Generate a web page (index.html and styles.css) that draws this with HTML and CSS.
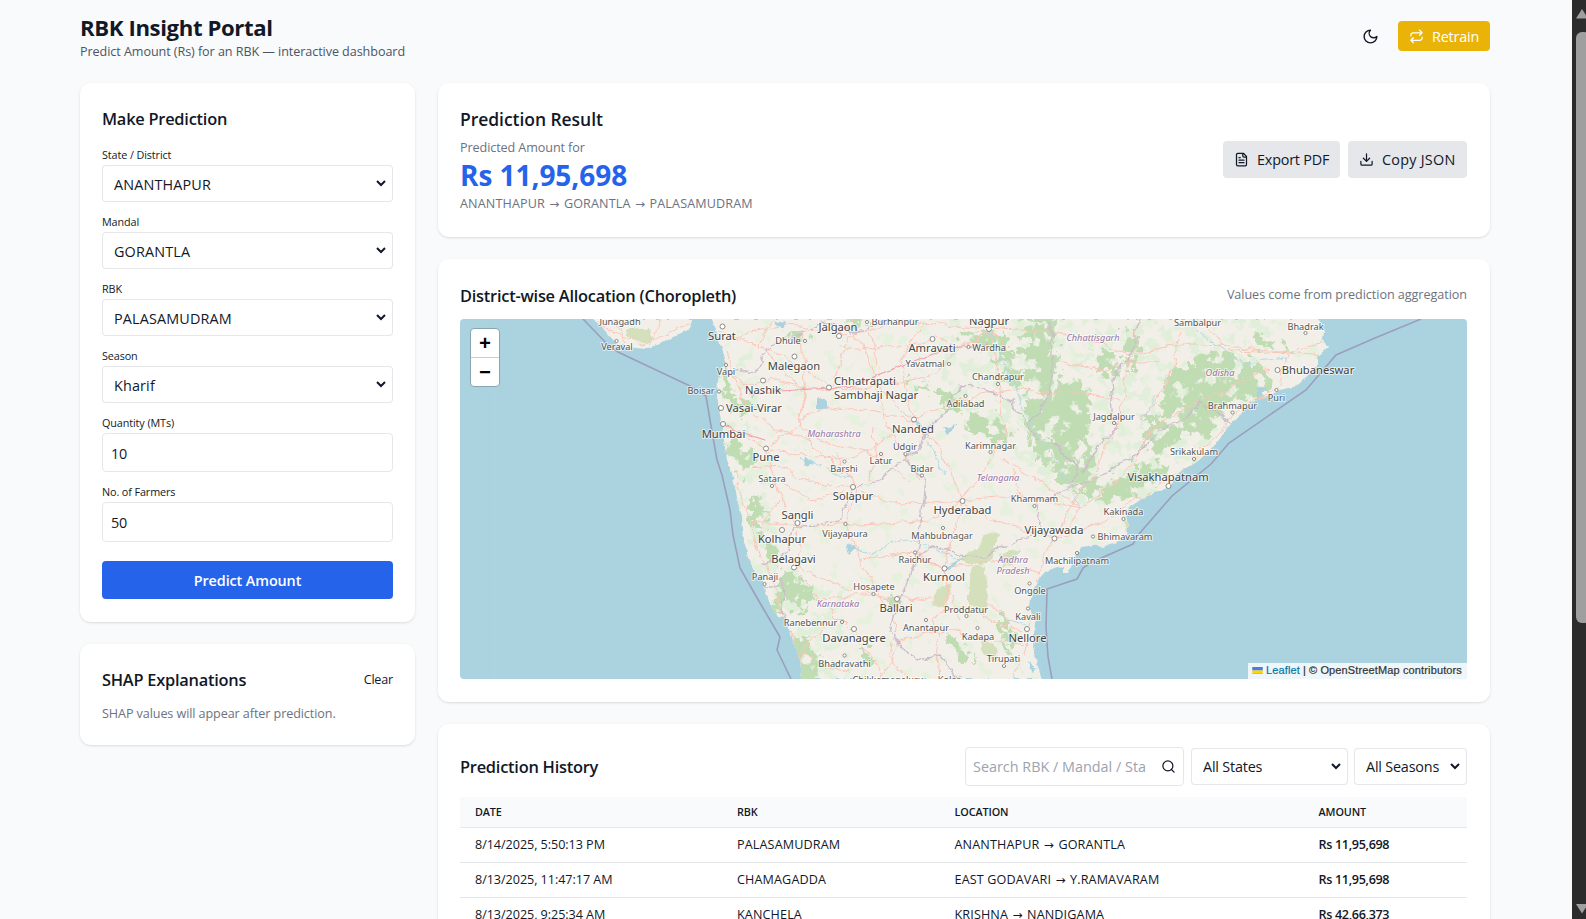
FILE: index.html
```html
<!DOCTYPE html>
<html lang="en">
<head>
<meta charset="utf-8">
<title>RBK Insight Portal</title>
<link rel="stylesheet" href="styles.css">
</head>
<body>
<div class="viewport">
<div class="page">
  <header class="topbar">
    <div>
      <h1 class="title">RBK Insight Portal</h1>
      <p class="subtitle">Predict Amount (Rs) for an RBK — interactive dashboard</p>
    </div>
    <div class="top-actions">
      <svg class="icon moon" viewBox="0 0 24 24"><path d="M12 3a6 6 0 0 0 9 9 9 9 0 1 1-9-9Z"/></svg>
      <button class="btn btn-retrain"><svg class="icon" viewBox="0 0 24 24"><path d="m17 2 4 4-4 4M3 11v-1a4 4 0 0 1 4-4h14M7 22l-4-4 4-4M21 13v1a4 4 0 0 1-4 4H3"/></svg><span>Retrain</span></button>
    </div>
  </header>

  <main class="columns">
    <div class="col">
      <section class="card form-card">
        <h2 class="heading">Make Prediction</h2>
        <div class="fields">
          <label class="field"><span class="label">State / District</span><select class="select"><option>ANANTHAPUR</option></select></label>
          <label class="field"><span class="label">Mandal</span><select class="select"><option>GORANTLA</option></select></label>
          <label class="field"><span class="label">RBK</span><select class="select"><option>PALASAMUDRAM</option></select></label>
          <label class="field"><span class="label">Season</span><select class="select"><option>Kharif</option></select></label>
          <label class="field"><span class="label">Quantity (MTs)</span><input class="input" value="10"></label>
          <label class="field"><span class="label">No. of Farmers</span><input class="input" value="50"></label>
        </div>
        <button class="btn-predict">Predict Amount</button>
      </section>
      <section class="card">
        <div class="shap-head"><h2 class="heading">SHAP Explanations</h2><span class="clear">Clear</span></div>
        <p class="muted">SHAP values will appear after prediction.</p>
      </section>
    </div>

    <div class="col">
      <section class="card result">
        <div>
          <h2 class="heading heading-lg">Prediction Result</h2>
          <p class="muted for">Predicted Amount for</p>
          <p class="amount">Rs 11,95,698</p>
          <p class="muted trail">ANANTHAPUR <i class="arr">→</i> GORANTLA <i class="arr">→</i> PALASAMUDRAM</p>
        </div>
        <div class="exports">
          <button class="btn btn-grey"><svg class="icon" viewBox="0 0 24 24"><path d="M15 2H6a2 2 0 0 0-2 2v16a2 2 0 0 0 2 2h12a2 2 0 0 0 2-2V7ZM14 2v4a2 2 0 0 0 2 2h4M10 9H8M16 13H8M16 17H8"/></svg><span>Export PDF</span></button>
          <button class="btn btn-grey btn-copy"><svg class="icon" viewBox="0 0 24 24"><path d="M12 3v12M7 10l5 5 5-5M21 15v4a2 2 0 0 1-2 2H5a2 2 0 0 1-2-2v-4"/></svg><span>Copy JSON</span></button>
        </div>
      </section>

      <section class="card map-card">
        <div class="map-head"><h2 class="heading">District-wise Allocation (Choropleth)</h2><span class="muted note">Values come from prediction aggregation</span></div>
        <div class="map">
          <svg class="map-art" viewBox="460 319 1007 360">
            <defs>
              <filter id="rough" x="-5%" y="-5%" width="110%" height="110%"><feTurbulence type="fractalNoise" baseFrequency=".09" numOctaves="3" seed="4"/><feDisplacementMap in="SourceGraphic" scale="26" xChannelSelector="R" yChannelSelector="G" result="shape"/><feTurbulence type="fractalNoise" baseFrequency=".07" numOctaves="4" seed="33"/><feColorMatrix values="0 0 0 0 0  0 0 0 0 0  0 0 0 0 0  0 14 0 0 -5.100" result="holes"/><feComposite in="shape" in2="holes" operator="in"/></filter>
              <filter id="wobble" x="-5%" y="-5%" width="110%" height="110%"><feTurbulence type="fractalNoise" baseFrequency=".05" numOctaves="2" seed="9"/><feDisplacementMap in="SourceGraphic" scale="12" xChannelSelector="R" yChannelSelector="G"/></filter>
              <filter id="shore" x="-2%" y="-2%" width="104%" height="104%"><feTurbulence type="fractalNoise" baseFrequency=".15" numOctaves="2" seed="2"/><feDisplacementMap in="SourceGraphic" scale="4" xChannelSelector="R" yChannelSelector="G"/></filter>
              <filter id="flecks" x="0" y="0" width="100%" height="100%"><feTurbulence type="fractalNoise" baseFrequency=".075" numOctaves="3" seed="21"/><feColorMatrix values="0 0 0 0 .78  0 0 0 0 .87  0 0 0 0 .72  10 0 0 0 -6"/><feComposite in2="SourceGraphic" operator="in"/></filter>
              <filter id="flecks-east" x="0" y="0" width="100%" height="100%"><feTurbulence type="fractalNoise" baseFrequency=".08" numOctaves="3" seed="57"/><feColorMatrix values="0 0 0 0 .75  0 0 0 0 .86  0 0 0 0 .70  12 0 0 0 -6.400"/><feComposite in2="SourceGraphic" operator="in"/></filter>
              <clipPath id="land"><path d="M593 319 602 327 611 338 617 343 628 347 644 349 660 344 675 336 690 329 692 319ZM712 319 717 337 723 350 724 365 718 380 717 397 719 410 722 425 724 440 727 460 732 473 735 487 738 503 742 517 744 540 748 557 755 572 763 580 765 593 772 607 778 617 785 618 787 623 793 640 800 660 802 679H1042L1038 667 1033 647 1035 623 1030 607 1032 593 1038 580 1045 572 1057 567 1063 568 1063 573 1068 573 1072 565 1077 555 1082 547 1093 545 1102 547 1117 542 1127 537 1128 523 1125 513 1130 507 1143 498 1168 487 1180 472 1195 463 1208 453 1217 443 1227 427 1242 413 1250 403 1267 397 1280 390 1297 386 1303 380 1317 367 1317 358 1328 348 1323 340 1324 330 1318 319Z"/></clipPath>
            </defs>
            <rect class="sea" x="460" y="319" width="1007" height="360"/>
            <g filter="url(#shore)"><g clip-path="url(#land)">
              <rect class="land" x="580" y="310" width="770" height="375"/>
              <rect filter="url(#flecks)" x="715" y="319" width="620" height="360"/>
              <path filter="url(#flecks-east)" d="M950 319h330l-20 70-60 60-50 50-80 10-60-60-70-60Z"/>
              <path filter="url(#flecks-east)" d="M712 350h40l10 90 20 120 60 30 10 89h-60l-30-80-30-120Z"/>
              <g class="wood" filter="url(#rough)">
                <path d="M1022 319h38l-6 22 5 22-12 22 8 20-10 20-16 8-5-22 10-24-14-20 6-24ZM1062 372l22 12 8 24-4 36-18 12-22-14-8-22 12-14ZM1030 432l34 4 22 26-2 26-24-8-22-22ZM960 410l30 4 26 22-10 8-28-8-20-14ZM936 390l18 6 8 16-14 2ZM1000 352l22 10-6 26-14-8ZM964 330l30 2 24 22-18 8-16-18-22-2Z"/>
                <path d="M1158 382l30-16 10-14 26-4 30 16 20 12-12 22-34 6-18 30-26-2-26 26-10-20 16-28ZM1124 326l14 14-4 38-10-22ZM1094 346l22 8 4 22-22-4ZM1090 486l26-10 28-14 26 6-18 18-30 14-34 2ZM1082 440l14 14-2 24-14 2ZM1148 420l16 6-10 18-14 2ZM1250 332l28 8 10 10-24 2Z"/>
                <path d="M722 376l12 10 4 22-9 8ZM738 396l14 6-6 14-10-4ZM728 440l14 4 14 16-12 16-10-14ZM752 496l14 10 4 20-8 12-10-18ZM764 540l14 10 2 18-12-8ZM784 570l28 12 6 16-18 12-20-4ZM772 594l8 4 6 18-9 0ZM790 636l16 6 20 20-4 20-22 0ZM890 592l10 10-4 12-12-8ZM996 600l14 24 2 34-12-20ZM846 319h30l-6 6h-26ZM790 328l22 4-8 10-16-2ZM910 376l12 6 6 8-12-2ZM944 636l20 4 14 20-16 0ZM860 648l12 8-4 10-10-6ZM1070 490l30-8 20 8-26 10Z"/>
              </g>
              <g class="scrub" filter="url(#wobble)"><path d="M956 560l30-22 12-4-4 24-14 8ZM970 566l16 2-2 46-14-8ZM936 590l18-6-12 20-10 2ZM1000 554l20-4-16 16ZM980 636l16 10 2 16-14-8ZM624 328l26 0 4 12-20 2ZM1122 515l6 8-2 8Z"/></g>
              <g class="road" filter="url(#wobble)">
                <path d="M713 330 775 352 808 370 830 388M720 340 790 326 850 334 920 322 988 328 1065 333 1130 352 1190 344 1280 350 1330 356M724 372 752 385 780 380 806 388 850 392 930 375 990 330M728 430 765 447 800 480 850 490 905 506 962 500M765 447 798 425 806 395M765 447 782 500 800 545 794 567 820 600 855 635 885 679M854 490 848 525 860 560 882 600 896 620 890 660 905 679M962 500 955 530 943 568 950 590 935 620 940 679M962 500 1020 495 1080 510 1055 538M962 500 940 450 914 420 880 390 870 330M962 500 990 460 1005 430 1000 390 990 330M1055 538 1035 580 1030 620 1027 645 1015 679M1055 538 1110 518 1145 495 1200 455 1235 415 1280 385 1290 350 1330 340M943 568 1000 560 1040 575M820 600 875 595 930 600 970 610 1020 630M765 447 850 460 913 420 960 400 1010 390 1080 392 1120 400M1080 510 1130 470 1150 430 1200 400 1270 370M794 567 850 590 897 600M742 470 790 468M750 520 800 528 860 525 930 520 962 500M1140 319 1130 365 1120 420 1090 480 1060 525M800 330 806 390 798 425 820 440 880 455 910 480M850 319 870 370 890 430 920 480M925 319 900 360 914 420M1200 319 1230 350 1290 352M1180 330 1170 380 1140 420M880 679 900 640 950 630 990 640 1027 645M597 322 640 344 690 325M615 319 626 346M660 319 650 345"/>
                <path d="M728 350 740 400 775 430 810 440 850 480 850 495M770 319 760 345 806 395M850 336 830 390M1010 470 1025 500M830 620 800 655 850 675M1060 360 1100 370 1160 360M780 480 810 500 843 495M875 430 872 480M935 335 960 350 990 330 1010 350M920 535 915 555 943 568 960 620M735 470 752 530 775 590 800 660M800 420 830 405 870 410 914 420M780 500 760 530M840 345 880 350 932 340M960 500 990 520 1055 538M1000 460 1040 480 1080 510M980 600 1010 620M860 560 915 553 943 568M835 450 853 487"/>
              </g>
              <path class="highway" d="M750 394 780 391 830 388 855 386 880 374 900 366 950 348 988 345 M722 424 735 430 765 440"/>
              <g class="water" filter="url(#wobble)"><path d="M818 398l10 2 2 6-12 2ZM945 424l12 1-8 6ZM848 545l8 4-6 6ZM912 418l12 6-4 4ZM944 566l20-8-16 12ZM1255 388l14-3-12 16ZM806 455l10 10-12 4ZM770 320l20 4-8 6ZM1030 660l8 10-5 5Z"/><path class="river" d="M848 545 870 555 905 538 940 555 965 560M990 330 1010 380 1035 430 1065 480 1080 510M1195 330 1240 362 1290 358M1155 395 1140 425M800 458 850 480M925 440 945 475M1010 620 1025 625"/></g>
              <path class="border" filter="url(#wobble)" d="M712 330 730 375 755 370 770 345 795 335 820 322 860 332 890 319M762 565 780 560 792 530 840 522 850 490 880 480 905 460 930 430 945 410 960 385 1015 400 1035 440 1050 435 1075 465 1070 490 1035 500 1040 530 985 556 930 550 915 560 900 600 890 630 915 660 940 655 960 679M925 490 920 530 915 560M905 460 925 480 925 510M1050 319 1050 390 1030 425M1070 490 1130 460 1160 430 1185 420 1200 400 1235 430M1140 319 1128 360 1110 380 1115 430 1080 470M765 590 782 580 785 618"/>
            </g></g>
            <path class="maritime" d="M583 319 608 345 618 352 690 386 706 396 710 420 717 460 722 475 730 510 733 535 740 568 760 603 780 637 777 650 791 679M1421 319 1375 338 1336 355 1306 390 1229 443 1211 464 1172 496 1139 534 1133 544 1115 552 1090 563 1083 568 1077 579 1047 589 1046 627 1048 657 1052 679"/>
            <path class="seam" d="M494.500 319V679"/>
            <g class="towns">
              <circle cx="722.500" cy="326.500" r="2.500"/><circle cx="763" cy="380.500" r="2.500"/><circle cx="721" cy="408" r="2.500"/><circle cx="723" cy="424" r="2.500"/><circle cx="766" cy="448.500" r="2.500"/><circle cx="782" cy="530" r="2.500"/><circle cx="797.500" cy="523" r="2.500"/><circle cx="794" cy="567.500" r="2.500"/><circle cx="839" cy="336" r="2.500"/><circle cx="794.500" cy="356.500" r="2.500"/><circle cx="829" cy="387.500" r="2.500"/><circle cx="932.500" cy="339" r="2.500"/><circle cx="989" cy="329" r="2.500"/><circle cx="914" cy="419.500" r="2.500"/><circle cx="853" cy="487" r="2.500"/><circle cx="962.500" cy="501" r="2.500"/><circle cx="1054.500" cy="538.500" r="2.500"/><circle cx="944.500" cy="568.500" r="2.500"/><circle cx="897" cy="599" r="2.500"/><circle cx="854" cy="629" r="2.500"/><circle cx="1027" cy="629" r="2.500"/><circle cx="1277.500" cy="370" r="2.500"/><circle cx="1168.500" cy="486" r="2.500"/>
              <circle cx="616.500" cy="341" r="1.600"/><circle cx="726" cy="365" r="1.600"/><circle cx="719" cy="391.500" r="1.600"/><circle cx="772" cy="486" r="1.600"/><circle cx="764.500" cy="584" r="1.600"/><circle cx="805" cy="341" r="1.600"/><circle cx="867" cy="322" r="1.600"/><circle cx="968.500" cy="347" r="1.600"/><circle cx="949" cy="364" r="1.600"/><circle cx="998" cy="384" r="1.600"/><circle cx="965.500" cy="396" r="1.600"/><circle cx="990.500" cy="452" r="1.600"/><circle cx="905.500" cy="454" r="1.600"/><circle cx="881" cy="454" r="1.600"/><circle cx="844.500" cy="461.500" r="1.600"/><circle cx="922" cy="475.500" r="1.600"/><circle cx="845.500" cy="524" r="1.600"/><circle cx="943" cy="528" r="1.600"/><circle cx="915" cy="552.500" r="1.600"/><circle cx="1034.500" cy="506" r="1.600"/><circle cx="1077" cy="553" r="1.600"/><circle cx="1093" cy="536.500" r="1.600"/><circle cx="873.500" cy="594" r="1.600"/><circle cx="842" cy="622" r="1.600"/><circle cx="926" cy="620" r="1.600"/><circle cx="966.500" cy="616" r="1.600"/><circle cx="977.500" cy="628" r="1.600"/><circle cx="1028" cy="608.500" r="1.600"/><circle cx="1029.500" cy="583.500" r="1.600"/><circle cx="1004" cy="666" r="1.600"/><circle cx="844.500" cy="655.500" r="1.600"/><circle cx="1305.500" cy="333" r="1.600"/><circle cx="1276.500" cy="390" r="1.600"/><circle cx="1232.500" cy="412.500" r="1.600"/><circle cx="1114" cy="423" r="1.600"/><circle cx="1194" cy="459" r="1.600"/><circle cx="1123.500" cy="519" r="1.600"/>
            </g>
            <g class="city">
              <text x="722" y="340">Surat</text><text x="763" y="394">Nashik</text><text x="754" y="412">Vasai-Virar</text><text x="723.500" y="438">Mumbai</text><text x="766" y="461">Pune</text><text x="794" y="370">Malegaon</text><text x="838" y="331">Jalgaon</text><text x="932" y="352">Amravati</text><text x="989" y="325">Nagpur</text><text x="865" y="385">Chhatrapati</text><text x="876" y="399">Sambhaji Nagar</text><text x="913" y="433">Nanded</text><text x="853" y="500">Solapur</text><text x="797.500" y="519">Sangli</text><text x="782" y="543">Kolhapur</text><text x="793.500" y="563">Belagavi</text><text x="962.500" y="514">Hyderabad</text><text x="1054" y="534">Vijayawada</text><text x="944" y="581">Kurnool</text><text x="896" y="612">Ballari</text><text x="854" y="642">Davanagere</text><text x="1027.500" y="642">Nellore</text><text x="1318" y="374">Bhubaneswar</text><text x="1168" y="481">Visakhapatnam</text>
            </g>
            <g class="town">
              <text x="620" y="325">Junagadh</text><text x="617" y="350">Veraval</text><text x="726" y="375">Vapi</text><text x="701" y="394">Boisar</text><text x="772" y="482">Satara</text><text x="765" y="580">Panaji</text><text x="788" y="344">Dhule</text><text x="895" y="325">Burhanpur</text><text x="989" y="351">Wardha</text><text x="925" y="367">Yavatmal</text><text x="998" y="380">Chandrapur</text><text x="965.500" y="407">Adilabad</text><text x="905" y="450">Udgir</text><text x="881" y="464">Latur</text><text x="844" y="472">Barshi</text><text x="922" y="472">Bidar</text><text x="990.500" y="449">Karimnagar</text><text x="1034.500" y="502">Khammam</text><text x="845" y="537">Vijayapura</text><text x="942" y="539">Mahbubnagar</text><text x="915" y="563">Raichur</text><text x="874" y="590">Hosapete</text><text x="966" y="613">Proddatur</text><text x="926" y="631">Anantapur</text><text x="978" y="640">Kadapa</text><text x="1028" y="620">Kavali</text><text x="1030" y="594">Ongole</text><text x="1003.500" y="662">Tirupati</text><text x="844.500" y="667">Bhadravathi</text><text x="810.500" y="626">Ranebennur</text><text x="888" y="683">Chikkamagaluru</text><text x="949" y="683">Kolar</text><text x="1077" y="564">Machilipatnam</text><text x="1125" y="540">Bhimavaram</text><text x="1123.500" y="515">Kakinada</text><text x="1194" y="455">Srikakulam</text><text x="1114" y="420">Jagdalpur</text><text x="1232.500" y="409">Brahmapur</text><text x="1276.500" y="401">Puri</text><text x="1305.500" y="330">Bhadrak</text><text x="1197.500" y="326">Sambalpur</text>
            </g>
            <g class="state">
              <text x="834" y="437">Maharashtra</text><text x="1093" y="341">Chhattisgarh</text><text x="998" y="481">Telangana</text><text x="1220" y="376">Odisha</text><text x="1013" y="563">Andhra</text><text x="1013" y="574">Pradesh</text><text x="838" y="607">Karnataka</text>
            </g>
          </svg>
          <div class="zoom"><span>+</span><span>−</span></div>
          <div class="credit"><svg class="flag" viewBox="0 0 12 8"><path fill="#4c7be1" d="M0 0h12v4H0z"/><path fill="#ffd500" d="M0 4h12v3H0z"/><path fill="#e0bc00" d="M0 7h12v1H0z"/></svg><b class="leaflet">Leaflet</b> <i>|</i> © OpenStreetMap contributors</div>
        </div>
      </section>

      <section class="card history">
        <div class="history-head">
          <h2 class="heading">Prediction History</h2>
          <div class="filters">
            <div class="search"><input class="search-input" placeholder="Search RBK / Mandal / State"><svg class="icon" viewBox="0 0 24 24"><circle cx="11" cy="11" r="8"/><path d="m21 21-4.300-4.300"/></svg></div>
            <select class="select states"><option>All States</option></select>
            <select class="select seasons"><option>All Seasons</option></select>
          </div>
        </div>
        <table class="table">
          <thead><tr><th class="c1">DATE</th><th class="c2">RBK</th><th class="c3">LOCATION</th><th>AMOUNT</th></tr></thead>
          <tbody>
            <tr><td>8/14/2025, 5:50:13 PM</td><td class="caps">PALASAMUDRAM</td><td class="caps">ANANTHAPUR <i class="arr">→</i> GORANTLA</td><td class="sum">Rs 11,95,698</td></tr>
            <tr><td>8/13/2025, 11:47:17 AM</td><td class="caps">CHAMAGADDA</td><td class="caps">EAST GODAVARI <i class="arr">→</i> Y.RAMAVARAM</td><td class="sum">Rs 11,95,698</td></tr>
            <tr><td>8/13/2025, 9:25:34 AM</td><td class="caps">KANCHELA</td><td class="caps">KRISHNA <i class="arr">→</i> NANDIGAMA</td><td class="sum">Rs 42,66,373</td></tr>
          </tbody>
        </table>
      </section>
    </div>
  </main>
</div>
<div class="scrollbar">
  <svg class="up" viewBox="0 0 12 10"><path d="M6 0 12 9.500H0Z"/></svg>
  <div class="thumb"></div>
  <svg class="down" viewBox="0 0 12 10"><path d="M0 0h12L6 9.500Z"/></svg>
</div>
</div>
</body>
</html>
```
FILE: styles.css
```css
* { box-sizing: border-box; }
html, body { margin: 0; height: 100%; overflow: hidden; }
body { font-family: "Open Sans", "Noto Sans", sans-serif; font-size: 14.4px; color: #111827; background: #f9fafb; letter-spacing: -.2px; }
h1, h2, p { margin: 0; }
button, select, input { font: inherit; color: inherit; letter-spacing: inherit; }
.viewport { display: flex; height: 919px; overflow: hidden; }
.page { flex: 1; padding: 12px 82px 0 80px; }
.topbar { display: flex; justify-content: space-between; height: 71px; }
.title { font-size: 22.2px; font-weight: 700; line-height: 30px; padding-top: 1px; letter-spacing: -.4px; }
.subtitle { font-size: 12.6px; line-height: 18px; color: #4b5563; letter-spacing: -.07px; }
.top-actions { display: flex; align-items: center; height: 48px; gap: 19px; }
.icon { width: 15px; height: 15px; fill: none; stroke: currentColor; stroke-width: 2; stroke-linecap: round; stroke-linejoin: round; flex: none; }
.moon { width: 17px; height: 17px; }
.btn { display: flex; align-items: center; border: 0; border-radius: 4px; white-space: nowrap; }
.btn-retrain { width: 92px; height: 30px; padding: 0 11px; gap: 8px; background: #eab308; color: #fff; }
.columns { display: grid; grid-template-columns: 335px 1052px; gap: 23px; align-items: start; }
.col { display: flex; flex-direction: column; gap: 22px; }
.card { background: #fff; border-radius: 11px; padding: 22px; box-shadow: 0 1px 3px rgba(0,0,0,.1), 0 1px 2px -1px rgba(0,0,0,.1); }
.heading { font-size: 16.4px; font-weight: 600; line-height: 27px; letter-spacing: -.24px; }
.heading-lg { font-size: 17.5px; line-height: 24px; letter-spacing: -.05px; margin-bottom: 3px; }
.form-card { height: 538.500px; }
.fields { display: flex; flex-direction: column; gap: 12px; margin-top: 15px; }
.field { display: flex; flex-direction: column; gap: 3px; }
.label { font-size: 10.8px; line-height: 15px; letter-spacing: -.1px; }
.select { height: 35px; margin: 1px; padding: 1px 7px 0 7px; border: 0 solid transparent; border-right-width: 3px; border-radius: 3px; box-shadow: 0 0 0 1px #e5e7eb; background: #fff; }
.field .select { letter-spacing: .15px; }
.input { height: 39.300px; width: 100%; padding: 2px 8px 0; border: 1px solid #e5e7eb; border-radius: 4px; background: #fff; }
.btn-predict { display: block; width: 100%; height: 38px; margin-top: 19px; padding-top: 2px; border: 0; border-radius: 4px; background: #2563eb; color: #fff; font-weight: 600; letter-spacing: -.1px; }
.shap-head, .map-head, .history-head { display: flex; justify-content: space-between; align-items: center; }
.clear { font-size: 12.6px; }
.muted { font-size: 12.6px; line-height: 19px; color: #6b7280; letter-spacing: -.09px; }
.shap-head + .muted { margin-top: 11px; }
.result { display: flex; justify-content: space-between; align-items: center; height: 154px; }
.for { margin-top: 7px; }
.amount { font-size: 28px; line-height: 34px; padding-top: 1px; font-weight: 700; color: #2563eb; letter-spacing: -.05px; }
.trail { margin-top: 2px; letter-spacing: .13px; }
.arr { font-family: "DejaVu Sans"; font-style: normal; font-size: .95em; margin: 0 1px; }
.exports { display: flex; gap: 8px; margin: 0 1px 2px 0; }
.btn-grey { width: 117px; height: 37px; padding: 0 11px; gap: 8px; background: #e5e7eb; }
.btn-copy { width: 119px; letter-spacing: .25px; }
.map-card { height: 443px; }
.map-head { height: 28px; margin-bottom: 10px; }
.note { margin: -1px 1px 0 0; letter-spacing: -.05px; }
.map { position: relative; height: 360px; margin-right: 1px; border-radius: 4px; overflow: hidden; }
.map-art { display: block; width: 1007px; height: 360px; }
.sea { fill: #aad3df; }
.land { fill: #f2efe9; }
.wood { fill: #bfdcb2; }
.scrub { fill: #d4dfbb; }
.road path { fill: none; stroke: #fbc6b8; stroke-width: 1; }
.highway { fill: none; stroke: #f0a0ae; stroke-width: 1.200; }
.water { fill: #aad3df; }
.river, .border, .maritime { fill: none; }
.river { stroke: #b4d8e4; }
.border { stroke: #cbbccb; stroke-width: 1.300; }
.maritime { stroke: #9b9fbb; stroke-width: 1.600; }
.seam { stroke: #b1d7e2; stroke-width: .5; }
.towns circle { fill: #fff; stroke: #8b8b86; stroke-width: 1; }
.map-art text { font-family: "Noto Sans", sans-serif; text-anchor: middle; letter-spacing: 0; paint-order: stroke; stroke: rgba(255,255,255,.65); stroke-width: 2px; stroke-linejoin: round; }
.city { font-size: 11.2px; fill: #444; }
.town { font-size: 9.2px; fill: #555; }
.state { font-size: 9.2px; font-style: italic; fill: #9673a3; }
.zoom { position: absolute; left: 10px; top: 9px; width: 30px; border: 1px solid #86a6b0; border-radius: 4px; background: #fff; display: flex; flex-direction: column; overflow: hidden; }
.zoom span { height: 28px; text-align: center; font: bold 20px/31px "Liberation Mono", monospace; color: #000; }
.zoom span + span { height: 29px; border-top: 1px solid #ccc; }
.credit { position: absolute; right: 0; bottom: 0; display: flex; align-items: center; gap: 3px; height: 16px; padding: 0 5px 2px 4px; background: rgba(255,255,255,.8); font: 500 11px/14px "Liberation Sans", sans-serif; color: #333; letter-spacing: .13px; -webkit-text-stroke: .2px currentColor; }
.credit i { font-style: normal; }
.flag { width: 11px; height: 7px; }
.leaflet { font-weight: 500; color: #0078a8; }
.history { padding-top: 23px; height: 400px; }
.history-head { height: 39px; margin-bottom: 11px; margin-right: 1px; }
.filters { display: flex; align-items: center; gap: 6px; }
.search { display: flex; align-items: center; width: 219px; height: 39px; padding: 0 7px; margin-right: 1px; border: 1px solid #e5e7eb; border-radius: 4px; }
.search-input { width: 173px; margin-right: 15px; border: 0; padding: 0; background: none; outline: 0; letter-spacing: 0; }
.search-input::placeholder { color: #9ca3af; }
.filters .select { padding-top: 0; }
.states { width: 155px; }
.filters .seasons { width: 111px; padding-right: 0; }
.table { width: 1007px; border-collapse: collapse; table-layout: fixed; font-size: 12.6px; letter-spacing: -.05px; }
.table th { height: 30px; padding: 0 15px; text-align: left; font-size: 10.8px; font-weight: 600; letter-spacing: -.1px; background: #f9fafb; border-bottom: 1px solid #e5e7eb; }
.table td { height: 35px; padding: 0 15px; border-bottom: 1px solid #e5e7eb; }
.c1 { width: 262px; }
.c2 { width: 217.500px; }
.c3 { width: 364px; }
.table .caps { letter-spacing: .13px; }
.table .sum { font-weight: 600; letter-spacing: -.33px; }
.scrollbar { width: 14px; background: #2c2c2c; overflow: hidden; padding: 9px 0 0 4px; display: flex; flex-direction: column; }
.up, .down { width: 12px; height: 10px; fill: #9f9f9f; flex: none; }
.thumb { width: 14px; height: 591px; margin-top: 13px; border-radius: 6px; background: #9f9f9f; flex: none; }
.down { margin-top: auto; margin-bottom: 5px; }
```
